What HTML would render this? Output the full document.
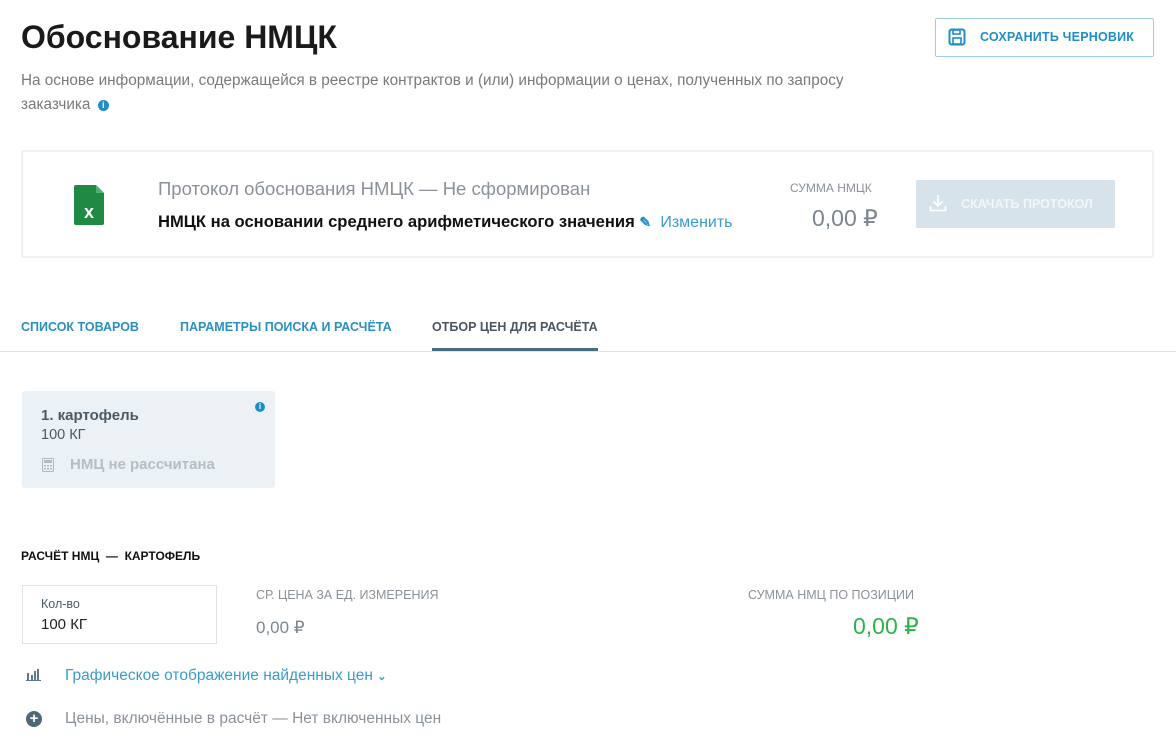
<!DOCTYPE html>
<html><head><meta charset="utf-8"><style>
*{box-sizing:border-box;margin:0;padding:0}
body{width:1176px;height:753px;overflow:hidden;background:#fff;font-family:"Liberation Sans","Noto Sans CJK SC",sans-serif;position:relative;color:#222}
.a{position:absolute;white-space:nowrap}
</style></head><body>
<div class="a" style="left:21px;top:19px;font-size:32px;font-weight:bold;color:#1a1a1a">Обоснование НМЦК</div>
<div class="a" style="left:21px;top:69px;font-size:15.3px;color:#7a7a7a;line-height:24px;white-space:normal;width:860px">На основе информации, содержащейся в реестре контрактов и (или) информации о ценах, полученных по запросу заказчика <span style="display:inline-block;width:11px;height:11px;border-radius:50%;background:#1e8fc6;color:#fff;font-size:9px;text-align:center;line-height:11px;font-weight:bold;vertical-align:1px;margin-left:3px">i</span></div>
<div class="a" style="left:935px;top:18px;width:219px;height:39px;border:1px solid #9fcfe6;border-radius:2px"></div>
<svg class="a" style="left:948px;top:28px" width="18" height="18" viewBox="0 0 18 18"><rect x="1.5" y="1.5" width="15" height="15" rx="2" fill="none" stroke="#1e8fc6" stroke-width="2"/><rect x="5" y="2" width="7" height="4" fill="none" stroke="#1e8fc6" stroke-width="1.6"/><rect x="5" y="10" width="8" height="6" fill="none" stroke="#1e8fc6" stroke-width="1.6"/></svg>
<div class="a" style="left:980px;top:30px;font-size:12.5px;font-weight:bold;color:#1e8fc6;letter-spacing:0.2px">СОХРАНИТЬ ЧЕРНОВИК</div>

<div class="a" style="left:21px;top:150px;width:1133px;height:108px;border:2px solid #eef2f5;border-radius:2px"></div>
<svg class="a" style="left:74px;top:185px" width="32" height="40" viewBox="0 0 32 40"><path d="M2 0H22L30 8V38a2 2 0 0 1-2 2H2a2 2 0 0 1-2-2V2a2 2 0 0 1 2-2z" fill="#1f8a43"/><path d="M22 0V8H30z" fill="#4fb072"/><text x="15" y="33" font-family="Liberation Sans" font-weight="bold" font-size="18" fill="#fff" text-anchor="middle">x</text></svg>
<div class="a" style="left:158px;top:178px;font-size:18.5px;color:#8a9199">Протокол обоснования НМЦК — Не сформирован</div>
<div class="a" style="left:158px;top:212px;font-size:16.6px;font-weight:bold;color:#111">НМЦК на основании среднего арифметического значения <span style="color:#1e8fc6;font-size:14px">✎</span>&nbsp; <span style="font-weight:normal;color:#3a9ccc;font-size:16px">Изменить</span></div>
<div class="a" style="left:790px;top:181px;font-size:12px;color:#8a9199">СУММА НМЦК</div>
<div class="a" style="left:812px;top:205px;font-size:23px;color:#7b8690">0,00 ₽</div>
<div class="a" style="left:916px;top:180px;width:199px;height:48px;background:#d6e3ea;border-radius:2px"></div>
<svg class="a" style="left:929px;top:193px" width="18" height="20" viewBox="0 0 18 20"><path d="M9 2V13M4.5 8.5L9 13L13.5 8.5M1.5 13V17.5H16.5V13" fill="none" stroke="#fff" stroke-width="1.6"/></svg>
<div class="a" style="left:961px;top:197px;font-size:12.5px;font-weight:bold;color:#f2f6f8">СКАЧАТЬ ПРОТОКОЛ</div>

<div class="a" style="left:21px;top:320px;font-size:12.5px;font-weight:bold;color:#2b8fc0">СПИСОК ТОВАРОВ</div>
<div class="a" style="left:180px;top:320px;font-size:12.5px;font-weight:bold;color:#2b8fc0">ПАРАМЕТРЫ ПОИСКА И РАСЧЁТА</div>
<div class="a" style="left:432px;top:320px;font-size:12.5px;font-weight:bold;color:#4a5660">ОТБОР ЦЕН ДЛЯ РАСЧЁТА</div>
<div class="a" style="left:432px;top:348px;width:166px;height:3px;background:#4a6d80"></div>
<div class="a" style="left:0;top:351px;width:1176px;height:1px;background:#e0e4e7"></div>

<div class="a" style="left:22px;top:391px;width:253px;height:97px;background:#ebf1f4;border-radius:3px"></div>
<div class="a" style="left:255px;top:402px;width:10px;height:10px;border-radius:50%;background:#1e8fc6;color:#fff;font-size:8px;text-align:center;line-height:10px;font-weight:bold">i</div>
<div class="a" style="left:41px;top:407px;font-size:15px;font-weight:bold;color:#4e5a63">1. картофель</div>
<div class="a" style="left:41px;top:427px;font-size:14.5px;color:#4e5a63">100 КГ</div>
<svg class="a" style="left:42px;top:458px" width="12" height="14" viewBox="0 0 12 14"><rect x="0.5" y="0.5" width="11" height="13" rx="1" fill="none" stroke="#b0bac2"/><rect x="2" y="2" width="8" height="3" fill="#b0bac2"/><g fill="#b0bac2"><rect x="2" y="7" width="2" height="1.5"/><rect x="5" y="7" width="2" height="1.5"/><rect x="8" y="7" width="2" height="1.5"/><rect x="2" y="10" width="2" height="1.5"/><rect x="5" y="10" width="2" height="1.5"/><rect x="8" y="10" width="2" height="1.5"/></g></svg>
<div class="a" style="left:70px;top:456px;font-size:15px;font-weight:bold;color:#b5bec5">НМЦ не рассчитана</div>

<div class="a" style="left:21px;top:549px;font-size:12px;font-weight:bold;color:#111">РАСЧЁТ НМЦ &nbsp;— &nbsp;КАРТОФЕЛЬ</div>
<div class="a" style="left:22px;top:585px;width:195px;height:59px;border:1px solid #dde3e7"></div>
<div class="a" style="left:41px;top:597px;font-size:12.5px;color:#4e5a63">Кол-во</div>
<div class="a" style="left:41px;top:616px;font-size:15px;color:#222">100 КГ</div>
<div class="a" style="left:256px;top:588px;font-size:12.5px;color:#8a9199">СР. ЦЕНА ЗА ЕД. ИЗМЕРЕНИЯ</div>
<div class="a" style="left:256px;top:618px;font-size:17px;color:#7b8690">0,00 ₽</div>
<div class="a" style="left:748px;top:588px;font-size:12.5px;color:#8a9199">СУММА НМЦ ПО ПОЗИЦИИ</div>
<div class="a" style="left:853px;top:613px;font-size:23px;color:#2db34a">0,00 ₽</div>

<svg class="a" style="left:26px;top:668px" width="16" height="13" viewBox="0 0 16 13"><g fill="#5b7a8c"><rect x="1" y="5" width="2" height="7"/><rect x="5" y="7" width="2" height="5"/><rect x="8" y="3" width="2" height="9"/><rect x="11" y="1" width="2" height="11"/><rect x="0" y="12" width="15" height="1"/></g></svg>
<div class="a" style="left:65px;top:667px;font-size:15.5px;color:#3a9ccc">Графическое отображение найденных цен <span style="font-size:11px;font-weight:bold">⌄</span></div>
<div class="a" style="left:26px;top:711px;width:16px;height:16px;border-radius:50%;background:#4e6878;color:#fff;font-size:15px;line-height:16px;text-align:center;font-weight:bold">+</div>
<div class="a" style="left:65px;top:710px;font-size:15.5px;color:#8a9199">Цены, включённые в расчёт — Нет включенных цен</div>
</body></html>
